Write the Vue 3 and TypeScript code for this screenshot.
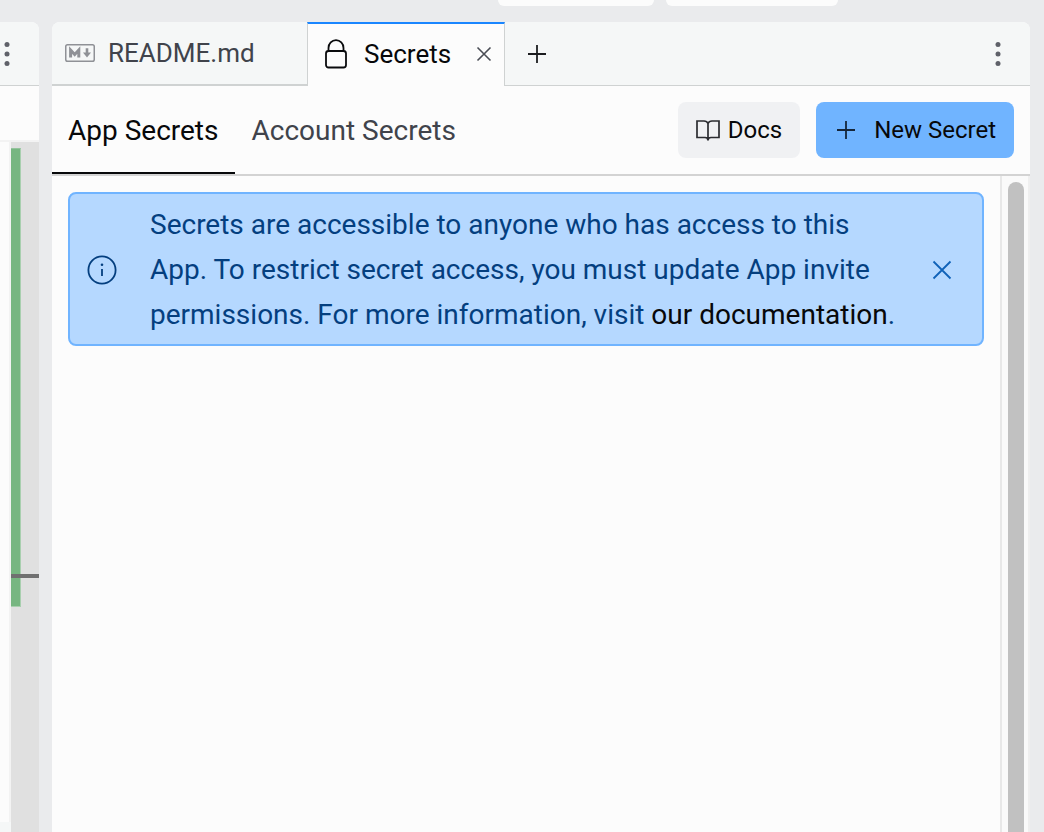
<script setup lang="ts">
import { ref } from 'vue'

type View = 'app' | 'account'

const views: { id: View; label: string }[] = [
  { id: 'app', label: 'App Secrets' },
  { id: 'account', label: 'Account Secrets' },
]
const activeView = ref<View>('app')
const showNotice = ref(true)
</script>

<template>
  <div class="workspace">
    <div class="topbar">
      <div class="pill"></div>
      <div class="pill pill-wide"></div>
    </div>
    <div class="panes">
      <section class="side-pane" aria-label="Editor">
        <header class="side-head">
          <button class="icon-button" type="button" aria-label="Editor options">
            <svg width="14" height="32" viewBox="0 0 14 32" fill="#5f6169">
              <circle cx="7" cy="6.5" r="2.5" /><circle cx="7" cy="16" r="2.5" /><circle cx="7" cy="25.5" r="2.5" />
            </svg>
          </button>
        </header>
        <div class="side-crumbs"></div>
        <div class="side-body">
          <div class="code"></div>
          <div class="ruler">
            <div class="changed"></div>
            <div class="cursor-mark"></div>
            <div class="changed changed-end"></div>
          </div>
        </div>
      </section>

      <main class="main-pane">
        <header class="tabs">
          <button class="tab" type="button">
            <svg class="md-icon" width="30" height="18" viewBox="0 0 30 18" fill="none" stroke="#8f9196">
              <rect x="0.75" y="0.75" width="28.5" height="16.5" rx="1.8" stroke-width="1.5" />
              <path d="M5.6 13.5V6L9.7 10.5L13.8 6V13.5" stroke-width="3" />
              <path d="M22 4.2V9.5" stroke-width="2.6" />
              <path d="M18 8.6H26L22 13.6Z" fill="#8f9196" stroke="none" />
            </svg>
            <span>README.md</span>
          </button>
          <div class="tab tab-active">
            <svg class="lock" width="22" height="30" viewBox="0 0 22 30" fill="none" stroke="#0a0b0d" stroke-width="1.8">
              <rect x="1" y="12" width="20" height="16.5" rx="2.5" />
              <path d="M3.5 12V9A7.5 7.8 0 0 1 18.5 9V12" />
            </svg>
            <span>Secrets</span>
            <button class="icon-button close" type="button" aria-label="Close Secrets">
              <svg width="16" height="16" viewBox="0 0 16 16" stroke="#4a4d55" stroke-width="1.6">
                <path d="M1.5 1.5L14.5 14.5M14.5 1.5L1.5 14.5" />
              </svg>
            </button>
          </div>
          <div class="tab-rest">
            <button class="icon-button" type="button" aria-label="New tab">
              <svg width="18" height="18" viewBox="0 0 18 18" stroke="#1b1c1f" stroke-width="1.8">
                <path d="M9 0V18M0 9H18" />
              </svg>
            </button>
            <button class="icon-button" type="button" aria-label="Pane options">
              <svg width="14" height="32" viewBox="0 0 14 32" fill="#5f6169">
                <circle cx="7" cy="6.5" r="2.5" /><circle cx="7" cy="16" r="2.5" /><circle cx="7" cy="25.5" r="2.5" />
              </svg>
            </button>
          </div>
        </header>

        <div class="toolbar">
          <nav class="views">
            <button
              v-for="view in views"
              :key="view.id"
              type="button"
              class="view"
              :class="{ 'view-active': view.id === activeView }"
              @click="activeView = view.id"
            >{{ view.label }}</button>
          </nav>
          <div class="actions">
            <button class="action" type="button">
              <svg width="24" height="22" viewBox="0 0 24 22" fill="none" stroke="#2b2c30" stroke-width="1.7">
                <path d="M12 4.5Q11 2 8 2H1V18.5H9Q12 18.5 12 21.5V4.5Q13 2 16 2H23V18.5H15Q12 18.5 12 21.5" />
              </svg>
              <span>Docs</span>
            </button>
            <button class="action action-primary" type="button">
              <svg width="18" height="18" viewBox="0 0 18 18" stroke="#15263a" stroke-width="1.8">
                <path d="M9 0V18M0 9H18" />
              </svg>
              <span>New Secret</span>
            </button>
          </div>
        </div>

        <div class="content">
          <div class="content-main">
            <div v-if="showNotice" class="notice" role="note">
              <svg class="info" width="30" height="30" viewBox="0 0 30 30" fill="none" stroke="#043f7f" stroke-width="1.8">
                <circle cx="15" cy="15" r="13.6" />
                <path d="M15 14V21" />
                <circle cx="15" cy="9.8" r="1.3" fill="#043f7f" stroke="none" />
              </svg>
              <p>
                Secrets are accessible to anyone who has access to this App. To restrict secret access, you must update App invite permissions. For more information, visit <a href="#">our documentation</a>.
              </p>
              <button class="icon-button dismiss" type="button" aria-label="Dismiss" @click="showNotice = false">
                <svg width="20" height="20" viewBox="0 0 20 20" stroke="#0f62b8" stroke-width="1.8">
                  <path d="M1.5 1.5L18.5 18.5M18.5 1.5L1.5 18.5" />
                </svg>
              </button>
            </div>
          </div>
          <div class="scrollbar"><div class="thumb"></div></div>
        </div>
      </main>
    </div>
  </div>
</template>

<style>
body {
  margin: 0;
}
</style>

<style scoped>
.workspace,
.workspace * {
  box-sizing: border-box;
}
.workspace {
  display: flex;
  flex-direction: column;
  height: 100vh;
  overflow: hidden;
  background: #eaebed;
  color: #07080a;
  font-family: Roboto, "Liberation Sans", sans-serif;
  font-size: 28px;
}
button {
  margin: 0;
  padding: 0;
  border: 0;
  background: none;
  font: inherit;
  color: inherit;
  cursor: pointer;
}
svg {
  display: block;
  flex: none;
}
.topbar {
  display: flex;
  gap: 12px;
  flex: none;
  height: 22px;
  padding-left: 498px;
}
.pill {
  width: 156px;
  height: 6px;
  border-radius: 0 0 8px 8px;
  background: #fcfcfc;
}
.pill-wide {
  width: 172px;
}
.panes {
  display: flex;
  flex: 1;
  gap: 13px;
  min-height: 0;
  padding-right: 14px;
}
.side-pane {
  display: flex;
  flex-direction: column;
  flex: none;
  width: 39px;
  overflow: hidden;
  border-top-right-radius: 8px;
  background: #fcfcfc;
}
.side-head {
  display: flex;
  align-items: center;
  flex: none;
  height: 64px;
  border-bottom: 1px solid #cfd2d2;
  background: #f5f7f7;
}
.side-crumbs {
  flex: none;
  height: 56px;
  border-bottom: 2px solid #f3f3f3;
}
.side-body {
  display: flex;
  flex: 1;
}
.code {
  flex: 1;
  margin-bottom: 10px;
  border-right: 2px solid #f3f3f3;
  box-shadow: 0 10px #f5f7f7;
}
.ruler {
  width: 28px;
  padding-top: 6px;
  background: #e0e0e0;
}
.changed {
  width: 10px;
  height: 426px;
  border-top: 1px solid #94c39c;
  border-right: 1px solid #a8cfae;
  background: #77b681;
}
.cursor-mark {
  height: 4px;
  background: #707070;
}
.changed-end {
  height: 29px;
  border-top: 0;
  border-bottom: 1px solid #a8cfae;
}
.main-pane {
  display: flex;
  flex-direction: column;
  flex: 1;
  min-width: 0;
  overflow: hidden;
  border-radius: 8px 8px 0 0;
  background: #fcfcfc;
}
.tabs {
  display: flex;
  flex: none;
  height: 64px;
  font-size: 26px;
}
.tab {
  display: flex;
  align-items: center;
  width: 255px;
  padding: 0 13px;
  gap: 13px;
  border-bottom: 2px solid #cfd2d2;
  background: #f5f7f7;
  color: #40434b;
}
.tab-active {
  width: 198px;
  padding: 0 12px 2px 17px;
  gap: 17px;
  border: 1px solid #cfd2d2;
  border-top: 2px solid #1a86ff;
  border-bottom: 0;
  background: #fcfcfc;
  color: #07080a;
}
.close {
  margin-left: auto;
}
.tab-rest {
  display: flex;
  flex: 1;
  align-items: center;
  justify-content: space-between;
  padding: 0 25px 0 23px;
  border-bottom: 1px solid #cfd2d2;
  background: #f5f7f7;
}
.toolbar {
  display: flex;
  justify-content: space-between;
  flex: none;
  height: 90px;
  padding-right: 16px;
  border-bottom: 2px solid #d3d3d3;
}
.views {
  display: flex;
}
.view {
  padding: 2px 17px 0 16px;
  border-bottom: 2px solid transparent;
  color: #40434b;
}
.view-active {
  border-bottom-color: #07080a;
  color: #07080a;
}
.actions {
  display: flex;
  align-items: center;
  gap: 16px;
}
.action {
  display: flex;
  align-items: center;
  gap: 8px;
  height: 56px;
  padding: 0 18px;
  border-radius: 8px;
  background: #f0f1f3;
  font-size: 24px;
}
.action-primary {
  gap: 19px;
  padding-left: 21px;
  background: #70b4ff;
}
.content {
  display: flex;
  flex: 1;
  min-height: 0;
}
.content-main {
  flex: 1;
  padding: 16px;
}
.notice {
  display: flex;
  align-items: center;
  padding: 8px 30px 7px 17px;
  border: 2px solid #70b4ff;
  border-radius: 8px;
  background: #b5d8ff;
  color: #043f7f;
}
.notice p {
  flex: 1;
  margin: 0 20px 0 33px;
  line-height: 45px;
}
.notice a {
  color: #07080a;
  text-decoration: none;
}
.scrollbar {
  width: 30px;
  padding: 6px 4px 0 6px;
  border-left: 2px solid #e8e8e8;
  border-right: 2px solid #efefef;
  background: #fafafa;
}
.thumb {
  width: 16px;
  height: 100%;
  border-radius: 8px 8px 0 0;
  background: #c1c1c1;
}
</style>
